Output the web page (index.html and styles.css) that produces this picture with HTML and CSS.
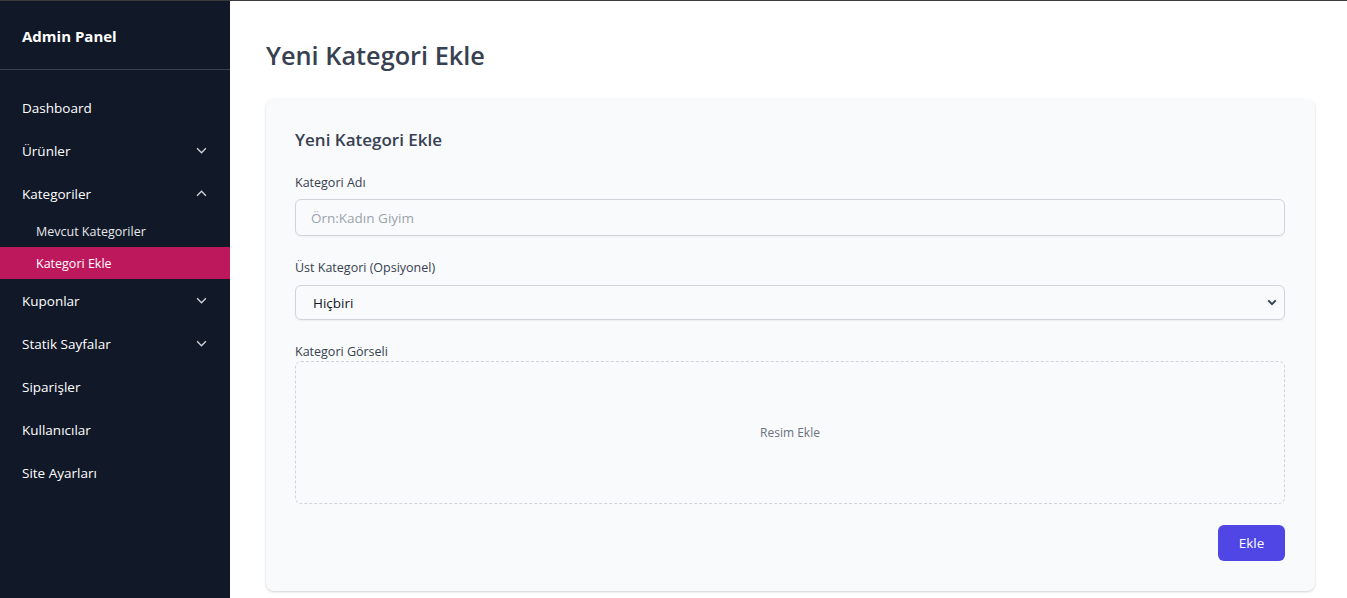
FILE: index.html
```html
<!DOCTYPE html>
<html lang="tr">
<head>
<meta charset="utf-8">
<title>Admin Panel</title>
<link rel="stylesheet" href="styles.css">
</head>
<body>
<div class="layout">
  <aside class="sidebar">
    <div class="brand">Admin Panel</div>
    <nav class="nav">
      <a class="nav-item">Dashboard</a>
      <a class="nav-item">Ürünler <svg class="chev" viewBox="0 0 10 6"><path d="M1 1l4 4 4-4"/></svg></a>
      <a class="nav-item">Kategoriler <svg class="chev" viewBox="0 0 10 6"><path d="M1 5l4-4 4 4"/></svg></a>
      <a class="sub-item">Mevcut Kategoriler</a>
      <a class="sub-item active">Kategori Ekle</a>
      <a class="nav-item">Kuponlar <svg class="chev" viewBox="0 0 10 6"><path d="M1 1l4 4 4-4"/></svg></a>
      <a class="nav-item">Statik Sayfalar <svg class="chev" viewBox="0 0 10 6"><path d="M1 1l4 4 4-4"/></svg></a>
      <a class="nav-item">Siparişler</a>
      <a class="nav-item">Kullanıcılar</a>
      <a class="nav-item">Site Ayarları</a>
    </nav>
  </aside>
  <main class="main">
    <h1 class="page-title">Yeni Kategori Ekle</h1>
    <section class="card">
      <h2 class="card-title">Yeni Kategori Ekle</h2>
      <label class="label l1">Kategori Adı</label>
      <input class="input" type="text" placeholder="Örn:Kadın Giyim">
      <label class="label l2">Üst Kategori (Opsiyonel)</label>
      <div class="select" role="combobox" aria-expanded="false">
        <span class="select-value">Hiçbiri</span>
        <svg class="select-chev" viewBox="0 0 12 8"><path d="M1.5 1.5l4.5 4.5 4.5-4.5"/></svg>
      </div>
      <label class="label l3">Kategori Görseli</label>
      <div class="dropzone">Resim Ekle</div>
      <div class="actions"><button class="btn">Ekle</button></div>
    </section>
  </main>
</div>
</body>
</html>
```

FILE: styles.css
```css
* { box-sizing: border-box; }
html, body { margin: 0; padding: 0; }
body {
  font-family: "Open Sans", "Noto Sans", sans-serif;
  background: #ffffff;
  border-top: 1px solid #3a3a3a;
  height: 598px;
  overflow: hidden;
}
.layout { display: flex; height: 597px; }
.sidebar {
  width: 230px;
  flex: none;
  background: #111827;
  color: #ffffff;
}
.brand {
  height: 69px;
  padding: 25px 22px 0;
  font-weight: 700;
  font-size: 15px;
  line-height: 20px;
  border-bottom: 1px solid #374151;
}
.nav { padding-top: 16px; display: flex; flex-direction: column; }
.nav-item {
  height: 43px;
  display: flex;
  align-items: center;
  justify-content: space-between;
  padding: 0 22px;
  font-size: 13.5px;
  color: #ffffff;
}
.chev {
  width: 11px;
  height: 7px;
  margin-right: 1px;
  fill: none;
  stroke: #d1d5db;
  stroke-width: 1.2;
}
.sub-item {
  height: 32px;
  display: flex;
  align-items: center;
  padding-left: 36px;
  font-size: 12.5px;
  color: #e5e7eb;
}
.sub-item.active { background: #be185d; color: #ffffff; }
.main {
  flex: 1;
  padding: 38px 32px 0 36px;
  min-width: 0;
}
.page-title {
  margin: 0;
  font-size: 25.3px;
  line-height: 32px;
  font-weight: 600;
  color: #374151;
}
.card {
  margin-top: 28px;
  background: #f9fafb;
  border-radius: 8px;
  box-shadow: 0 1px 3px rgba(0,0,0,0.12), 0 1px 2px rgba(0,0,0,0.06);
  padding: 29px 30px 30px 29px;
  display: flex;
  flex-direction: column;
}
.card-title {
  margin: 0;
  font-size: 17px;
  line-height: 24px;
  font-weight: 600;
  color: #374151;
}
.label {
  display: block;
  font-size: 12.5px;
  line-height: 18px;
  font-weight: 500;
  color: #374151;
}
.l1 { margin-top: 22px; }
.l2, .l3 { margin-top: 23px; }
.input {
  margin-top: 7px;
  height: 37px;
  width: 100%;
  border: 1px solid #d1d5db;
  border-radius: 6px;
  background: #f9fafb;
  padding: 0 15px;
  font-family: inherit;
  font-size: 13.5px;
  color: #111827;
  box-shadow: 0 1px 2px rgba(0,0,0,0.05);
}
.input::placeholder { color: #9ca3af; }
.select {
  margin-top: 8px;
  height: 35px;
  border: 1px solid #d1d5db;
  border-radius: 6px;
  background: #f9fafb;
  padding: 0 7px 0 17px;
  display: flex;
  align-items: center;
  justify-content: space-between;
  font-size: 13.5px;
  color: #111827;
  box-shadow: 0 1px 2px rgba(0,0,0,0.05);
}
.select-chev {
  width: 10px;
  height: 7px;
  fill: none;
  stroke: #374151;
  stroke-width: 2.4;
}
.dropzone {
  margin-top: 0;
  height: 143px;
  border: 1px dashed #d1d5db;
  border-radius: 6px;
  display: flex;
  align-items: center;
  justify-content: center;
  font-size: 12px;
  color: #6b7280;
}
.actions { display: flex; justify-content: flex-end; margin-top: 21px; }
.btn {
  width: 67px;
  height: 36px;
  border: none;
  border-radius: 6px;
  background: #4f46e5;
  color: #ffffff;
  font-family: inherit;
  font-size: 13.5px;
}
```
